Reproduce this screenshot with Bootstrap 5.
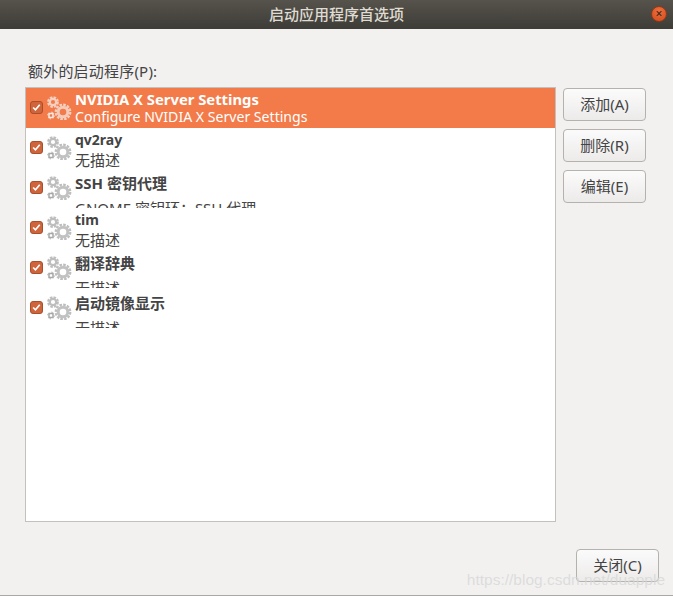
<!DOCTYPE html>
<html lang="en">
<head>
    <meta charset="UTF-8">
    <meta name="viewport" content="width=device-width, initial-scale=1.0">
    <title>启动应用程序首选项</title>
    <link href="https://cdn.jsdelivr.net/npm/bootstrap@5.3.3/dist/css/bootstrap.min.css" rel="stylesheet">
    <style>
        html, body {
            height: 596px;
            overflow: hidden;
        }
        body {
            background-color: #f2f1f0;
            color: #444;
            font-family: "Noto Sans", "Noto Sans CJK SC", sans-serif;
            font-size: 15px;
        }
        .win-title {
            height: 29px;
            background: linear-gradient(#56534c, #3e3c37);
            color: #dfdbd2;
            font-weight: 500;
        }
        .win-close {
            right: 6px;
            top: 6px;
            width: 16px;
            height: 16px;
            background: radial-gradient(circle at 50% 30%, #f0703f, #cf4a1c);
            border: 1px solid #8f3a16;
            font-size: 12px;
            line-height: 13px;
            color: #41281c;
        }
        .win-body {
            padding: 33px 27px 0 25px;
            height: 567px;
            border-bottom: 1px solid #a9a8a6;
        }
        .list-label {
            padding-left: 3px;
            height: 25px;
            line-height: 18px;
            letter-spacing: .2px;
        }
        .app-list {
            width: 531px;
            height: 435px;
            background: #fff;
            border: 1px solid #c3c1bd;
        }
        .app-row {
            height: 40px;
            overflow: hidden;
        }
        .app-row.active-row {
            background: #f37b4a;
            color: #fff;
        }
        .app-check {
            width: 13px;
            height: 13px;
            margin: 13px 2px 0 4px;
            background: #d0643a;
            border: 1px solid #a84f2c;
            border-radius: 3px;
        }
        .app-icon {
            width: 26px;
            height: 26px;
            margin: 6px 3px 0 1px;
            color: #a8a8a8;
        }
        .active-row .app-icon {
            color: #f4ece8;
        }
        .app-name {
            font-weight: 700;
            line-height: 17px;
            padding-top: 3px;
            font-size: 14px;
        }
        .app-name.wide {
            font-size: 14.8px;
        }
        .app-name.cjk {
            line-height: 25px;
            font-size: 15px;
        }
        .app-desc {
            line-height: 17px;
            font-size: 14.1px;
        }
        .app-desc.cjk {
            padding-top: 3px;
            line-height: 19px;
            font-size: 15px;
        }
        .side-btns {
            width: 83px;
            margin-left: 7px;
            padding-top: 1px;
        }
        .gtk-btn {
            height: 33px;
            width: 83px;
            padding: 0;
            font-size: 15px;
            color: #444;
            background: linear-gradient(#fcfbfb, #ecebea);
            border: 1px solid #b5b2ad;
            border-radius: 4px;
        }
        .close-row {
            padding: 27px 0 0 0;
            margin-right: -13px;
        }
        .watermark {
            right: 8px;
            bottom: 5px;
            color: rgba(215, 215, 215, .8);
            font-family: "Liberation Sans", sans-serif;
            font-size: 15.500px;
        }
    </style>
</head>
<body>
    <svg width="0" height="0" class="position-absolute">
        <symbol id="gears" viewBox="0 0 26 26">
            <g fill="none" stroke="currentColor">
                <circle cx="7" cy="8" r="3.200" stroke-width="2.200" opacity=".75"/>
                <circle cx="7" cy="8" r="5" stroke-width="1.800" stroke-dasharray="2.600 1.330" opacity=".75"/>
                <circle cx="17" cy="18" r="4.800" stroke-width="3" opacity=".7"/>
                <circle cx="17" cy="18" r="7.300" stroke-width="2.200" stroke-dasharray="2.600 1.220" opacity=".75"/>
                <rect x="3" y="19.500" width="4" height="4" stroke-width="1.500"/>
                <circle cx="5" cy="21.500" r="3.300" stroke-width="1.200" stroke-dasharray="1.300 3.880" opacity=".8"/>
            </g>
        </symbol>
        <symbol id="tick" viewBox="0 0 13 13">
            <path fill="none" stroke="#fff" stroke-width="2" d="M2.500 6.500l2.800 2.800 5-6"/>
        </symbol>
    </svg>

    <div class="win-title d-flex align-items-center justify-content-center position-relative">
        启动应用程序首选项
        <div class="win-close position-absolute rounded-circle text-center">×</div>
    </div>

    <div class="win-body">
        <div class="list-label">额外的启动程序(P):</div>
        <div class="d-flex">
            <div class="app-list" id="apps"></div>
            <div class="side-btns d-flex flex-column gap-2">
                <button class="gtk-btn">添加(A)</button>
                <button class="gtk-btn">删除(R)</button>
                <button class="gtk-btn">编辑(E)</button>
            </div>
        </div>
        <div class="close-row d-flex justify-content-end">
            <button class="gtk-btn">关闭(C)</button>
        </div>
    </div>
    <div class="watermark position-absolute">https://blog.csdn.net/duapple</div>

    <script>
        let apps = [
            { name: "NVIDIA X Server Settings", desc: "Configure NVIDIA X Server Settings", nameClass: "wide", active: true },
            { name: "qv2ray", desc: "无描述", descClass: "cjk" },
            { name: "SSH 密钥代理", desc: "GNOME 密钥环：SSH 代理", nameClass: "cjk", descClass: "cjk" },
            { name: "tim", desc: "无描述", descClass: "cjk" },
            { name: "翻译辞典", desc: "无描述", nameClass: "cjk", descClass: "cjk" },
            { name: "启动镜像显示", desc: "无描述", nameClass: "cjk", descClass: "cjk" }
        ];

        let str = "";
        for (let app of apps) {
            str += `
            <div class="app-row d-flex ${app.active ? "active-row" : ""}">
                <svg class="app-check flex-shrink-0"><use href="#tick"/></svg>
                <svg class="app-icon flex-shrink-0"><use href="#gears"/></svg>
                <div>
                    <div class="app-name ${app.nameClass || ""}">${app.name}</div>
                    <div class="app-desc ${app.descClass || ""}">${app.desc}</div>
                </div>
            </div>`;
        }
        document.getElementById("apps").innerHTML = str;
    </script>
    <script src="https://cdn.jsdelivr.net/npm/bootstrap@5.3.3/dist/js/bootstrap.bundle.min.js"></script>
</body>
</html>
